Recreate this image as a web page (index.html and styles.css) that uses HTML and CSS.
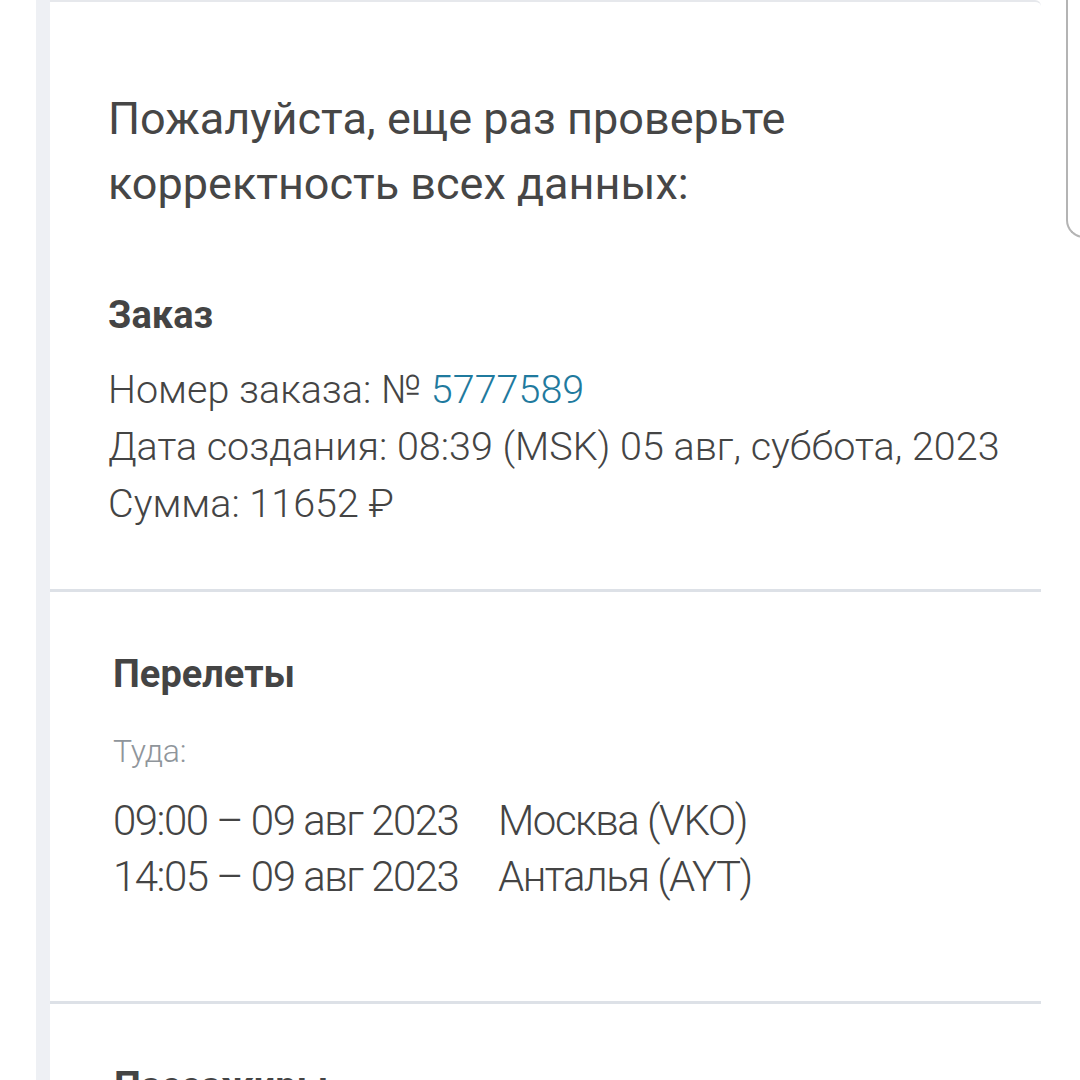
FILE: index.html
```
<!DOCTYPE html>
<html lang="ru">
<head>
    <meta charset="UTF-8">
    <meta name="viewport" content="width=device-width, initial-scale=1.0">
    <title>Проверка заказа</title>
    <link rel="stylesheet" href="styles.css">
</head>
<body>
    <div class="page">
        <div class="side-strip"></div>
        <div class="card">
            <section class="block block-order">
                <h1 class="intro">Пожалуйста, еще раз проверьте корректность всех данных:</h1>
                <h2 class="block-title">Заказ</h2>
                <div class="info-list">
                    <div class="info-row">Номер заказа: № <span class="order-num">5777589</span></div>
                    <div class="info-row">Дата создания: 08:39 (MSK) 05 авг, суббота, 2023</div>
                    <div class="info-row">Сумма: 11652 ₽</div>
                </div>
            </section>
            <section class="block block-flights">
                <h2 class="block-title">Перелеты</h2>
                <div class="direction">Туда:</div>
                <div class="flight-list">
                    <div class="flight-row"><span class="flight-time">09:00 – 09 авг 2023</span><span class="flight-city">Москва (VKO)</span></div>
                    <div class="flight-row"><span class="flight-time">14:05 – 09 авг 2023</span><span class="flight-city">Анталья (AYT)</span></div>
                </div>
            </section>
            <section class="block block-passengers">
                <h2 class="block-title">Пассажиры</h2>
            </section>
        </div>
        <div class="popup-edge"></div>
    </div>
</body>
</html>
```

FILE: styles.css
```
body {
    margin: 0;
    background: #ffffff;
    font-family: Roboto, "Liberation Sans", sans-serif;
    color: #444444;
}
.page {
    display: flex;
    height: 1080px;
    overflow: hidden;
    position: relative;
}
.side-strip {
    width: 14px;
    margin-left: 36px;
    background: #eef0f4;
    flex-shrink: 0;
}
.card {
    width: 991px;
    flex-shrink: 0;
    border-top: 2px solid #e6e8ec;
    border-top-right-radius: 6px;
}
.block {
    border-bottom: 3px solid #dde1e7;
}
.block-order {
    padding: 84px 0 57px 58px;
}
.block-flights {
    padding: 62px 0 96px 63px;
}
.block-passengers {
    padding: 62px 0 0 64px;
    border-bottom: none;
}
.intro {
    margin: 0 0 79px;
    font-size: 45px;
    font-weight: 400;
    line-height: 65px;
    width: 800px;
    color: #464646;
}
.block-title {
    margin: 0;
    font-size: 38px;
    font-weight: 700;
    line-height: 40px;
    color: #444444;
}
.info-list {
    margin-top: 26px;
}
.info-row {
    font-size: 39.5px;
    font-weight: 300;
    line-height: 57px;
    color: #444444;
    white-space: nowrap;
}
.order-num {
    color: #1f7a9e;
}
.direction {
    margin-top: 39px;
    font-size: 32px;
    font-weight: 300;
    line-height: 36px;
    letter-spacing: -0.3px;
    color: #8f959b;
}
.flight-list {
    margin-top: 24px;
}
.flight-row {
    display: flex;
    font-size: 42px;
    font-weight: 300;
    line-height: 56px;
    color: #444444;
    white-space: nowrap;
}
.flight-time {
    width: 385px;
    letter-spacing: -1.5px;
}
.flight-city {
    letter-spacing: -1.5px;
}
.popup-edge {
    position: absolute;
    left: 1066px;
    top: -20px;
    width: 40px;
    height: 256px;
    border-left: 2px solid #b4b4b4;
    border-bottom: 2px solid #b4b4b4;
    border-bottom-left-radius: 18px;
}
```
